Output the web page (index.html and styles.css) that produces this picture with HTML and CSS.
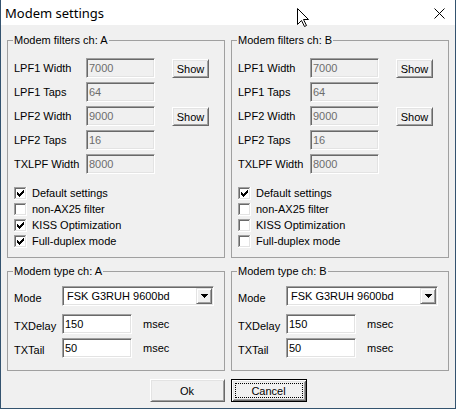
FILE: index.html
```html
<!DOCTYPE html>
<html>
<head>
<meta charset="utf-8">
<title>Modem settings</title>
<link rel="stylesheet" href="styles.css">
</head>
<body>
<svg class="defs" width="0" height="0">
  <defs>
    <symbol id="cb" viewBox="0 0 13 13">
      <rect x="0" y="0" width="13" height="13" fill="#fff"/>
      <rect x="0" y="0" width="12" height="1" fill="#a0a0a0"/>
      <rect x="0" y="0" width="1" height="12" fill="#a0a0a0"/>
      <rect x="1" y="1" width="10" height="1" fill="#696969"/>
      <rect x="1" y="1" width="1" height="10" fill="#696969"/>
      <rect x="1" y="11" width="11" height="1" fill="#e3e3e3"/>
      <rect x="11" y="1" width="1" height="11" fill="#e3e3e3"/>
    </symbol>
    <symbol id="cb-on" viewBox="0 0 13 13">
      <use href="#cb"/>
      <rect x="3" y="5" width="1" height="3" fill="#000"/>
      <rect x="4" y="6" width="1" height="3" fill="#000"/>
      <rect x="5" y="7" width="1" height="3" fill="#000"/>
      <rect x="6" y="6" width="1" height="3" fill="#000"/>
      <rect x="7" y="5" width="1" height="3" fill="#000"/>
      <rect x="8" y="4" width="1" height="3" fill="#000"/>
      <rect x="9" y="3" width="1" height="3" fill="#000"/>
    </symbol>
    <symbol id="tri" viewBox="0 0 7 4">
      <rect x="0" y="0" width="7" height="1" fill="#000"/>
      <rect x="1" y="1" width="5" height="1" fill="#000"/>
      <rect x="2" y="2" width="3" height="1" fill="#000"/>
      <rect x="3" y="3" width="1" height="1" fill="#000"/>
    </symbol>
  </defs>
</svg>

<div class="window">
  <div class="titlebar">
    <span class="title">Modem settings</span>
    <svg class="close" width="11" height="11" viewBox="0 0 11 11">
      <path d="M0.5 0.5 L10.5 10.5 M10.5 0.5 L0.5 10.5" stroke="#000" stroke-width="1" fill="none"/>
    </svg>
  </div>

  <div class="client">
    <div class="columns">
      <div class="col">
        <fieldset class="group filters">
          <legend>Modem filters ch: A</legend>
          <div class="filter-grid">
            <span class="lbl">LPF1 Width</span><span class="edit disabled">7000</span><button class="btn show">Show</button>
            <span class="lbl">LPF1 Taps</span><span class="edit disabled">64</span><span></span>
            <span class="lbl">LPF2 Width</span><span class="edit disabled">9000</span><button class="btn show">Show</button>
            <span class="lbl">LPF2 Taps</span><span class="edit disabled">16</span><span></span>
            <span class="lbl">TXLPF Width</span><span class="edit disabled">8000</span><span></span>
          </div>
          <div class="checks">
            <div class="check"><svg class="box"><use href="#cb-on"/></svg><span>Default settings</span></div>
            <div class="check"><svg class="box"><use href="#cb"/></svg><span>non-AX25 filter</span></div>
            <div class="check"><svg class="box"><use href="#cb-on"/></svg><span>KISS Optimization</span></div>
            <div class="check"><svg class="box"><use href="#cb-on"/></svg><span>Full-duplex mode</span></div>
          </div>
        </fieldset>
        <fieldset class="group type">
          <legend>Modem type ch: A</legend>
          <div class="type-grid">
            <span class="lbl">Mode</span>
            <div class="combo"><span class="combo-text">FSK G3RUH 9600bd</span><span class="drop"><svg class="tri"><use href="#tri"/></svg></span></div>
            <span class="lbl low">TXDelay</span><span class="edit">150</span><span class="unit">msec</span>
            <span class="lbl low">TXTail</span><span class="edit">50</span><span class="unit">msec</span>
          </div>
        </fieldset>
      </div>

      <div class="col">
        <fieldset class="group filters">
          <legend>Modem filters ch: B</legend>
          <div class="filter-grid">
            <span class="lbl">LPF1 Width</span><span class="edit disabled">7000</span><button class="btn show">Show</button>
            <span class="lbl">LPF1 Taps</span><span class="edit disabled">64</span><span></span>
            <span class="lbl">LPF2 Width</span><span class="edit disabled">9000</span><button class="btn show">Show</button>
            <span class="lbl">LPF2 Taps</span><span class="edit disabled">16</span><span></span>
            <span class="lbl">TXLPF Width</span><span class="edit disabled">8000</span><span></span>
          </div>
          <div class="checks">
            <div class="check"><svg class="box"><use href="#cb-on"/></svg><span>Default settings</span></div>
            <div class="check"><svg class="box"><use href="#cb"/></svg><span>non-AX25 filter</span></div>
            <div class="check"><svg class="box"><use href="#cb"/></svg><span>KISS Optimization</span></div>
            <div class="check"><svg class="box"><use href="#cb"/></svg><span>Full-duplex mode</span></div>
          </div>
        </fieldset>
        <fieldset class="group type">
          <legend>Modem type ch: B</legend>
          <div class="type-grid">
            <span class="lbl">Mode</span>
            <div class="combo"><span class="combo-text">FSK G3RUH 9600bd</span><span class="drop"><svg class="tri"><use href="#tri"/></svg></span></div>
            <span class="lbl low">TXDelay</span><span class="edit">150</span><span class="unit">msec</span>
            <span class="lbl low">TXTail</span><span class="edit">50</span><span class="unit">msec</span>
          </div>
        </fieldset>
      </div>
    </div>

    <div class="buttons">
      <button class="btn action">Ok</button>
      <button class="btn action default">Cancel</button>
    </div>
  </div>

  <svg class="cursor" width="13" height="20" viewBox="0 0 13 20">
    <path d="M0.5 0.5 L0.5 16.5 L4.5 12.5 L7.5 18.5 L9.5 17.5 L6.5 11.5 L11.5 11.5 Z" fill="#fff" stroke="#000" stroke-width="1" stroke-linejoin="miter"/>
  </svg>
</div>
</body>
</html>
```

FILE: styles.css
```css
* { box-sizing: border-box; }

html, body {
  margin: 0;
  padding: 0;
}

body {
  background: #f0f0f0;
  font-family: "Liberation Sans", Arial, sans-serif;
  font-size: 11px;
  color: #000;
}

.defs {
  position: absolute;
  width: 0;
  height: 0;
  overflow: hidden;
}

.window {
  position: relative;
  width: 456px;
  height: 409px;
  border: 1px solid #34536f;
  border-top: none;
  background: #f0f0f0;
  display: flex;
  flex-direction: column;
  overflow: hidden;
}

.titlebar {
  height: 25px;
  flex: none;
  background: #fff;
  display: flex;
  align-items: center;
  justify-content: space-between;
  padding: 0 10px 0 4px;
}

.title {
  font-family: "Noto Sans", sans-serif;
  font-size: 13px;
  color: #000;
}

.close {
  display: block;
  margin-top: 2px;
}

.client {
  padding: 8px 6px 0;
  display: flex;
  flex-direction: column;
}

.columns {
  display: grid;
  grid-template-columns: 1fr 1fr;
  column-gap: 6px;
}

.col {
  display: flex;
  flex-direction: column;
  gap: 6px;
}

fieldset.group {
  margin: 0;
  min-width: 0;
  border: 1px solid #a0a0a0;
  padding: 11px 6px 8px;
}

fieldset.type {
  padding: 8px 6px 12px;
}

legend {
  padding: 0 1px;
  margin-left: -1px;
  line-height: 14px;
  font-size: 11px;
}

.filter-grid {
  display: grid;
  grid-template-columns: 72px 69px 54px;
  grid-auto-rows: 20px;
  row-gap: 4px;
  align-items: center;
}

.lbl {
  white-space: nowrap;
}

.edit {
  height: 20px;
  border: 1px solid;
  border-color: #a0a0a0 #fff #fff #a0a0a0;
  box-shadow: inset 1px 1px #696969, inset -1px -1px #e3e3e3;
  background: #fff;
  padding: 0 2px;
  display: flex;
  align-items: center;
  white-space: nowrap;
}

.edit.disabled {
  background: #f0f0f0;
  color: #6d6d6d;
}

.btn {
  font-family: inherit;
  font-size: 11px;
  color: #000;
  background: #f0f0f0;
  border: 1px solid;
  border-color: #fff #696969 #696969 #fff;
  box-shadow: inset 1px 1px #e3e3e3, inset -1px -1px #a0a0a0;
  padding: 0;
  margin: 0;
  display: flex;
  align-items: center;
  justify-content: center;
  position: relative;
}

.show {
  width: 37px;
  height: 19px;
  justify-self: end;
  align-self: end;
}

.checks {
  margin-top: 11px;
  display: flex;
  flex-direction: column;
}

.check {
  height: 16px;
  display: flex;
  align-items: center;
  gap: 5px;
  white-space: nowrap;
}

.box {
  width: 13px;
  height: 13px;
  flex: none;
  display: block;
}

.type-grid {
  display: grid;
  grid-template-columns: 48px 70px 1fr;
  grid-template-rows: 24px 20px 20px;
  row-gap: 4px;
  align-items: center;
}

.lbl.low {
  padding-top: 3px;
}

.combo {
  grid-column: 2 / 4;
  align-self: start;
  width: 152px;
  height: 20px;
  border: 1px solid;
  border-color: #a0a0a0 #fff #fff #a0a0a0;
  box-shadow: inset 1px 1px #696969, inset -1px -1px #e3e3e3;
  background: #fff;
  padding: 1px 1px 1px 4px;
  display: flex;
  align-items: center;
}

.combo-text {
  flex: 1;
  white-space: nowrap;
}

.drop {
  width: 16px;
  height: 16px;
  flex: none;
  background: #f0f0f0;
  border: 1px solid;
  border-color: #e3e3e3 #696969 #696969 #e3e3e3;
  box-shadow: inset 1px 1px #fff, inset -1px -1px #a0a0a0;
  display: flex;
  align-items: center;
  justify-content: center;
}

.tri {
  width: 7px;
  height: 4px;
  display: block;
}

.unit {
  padding-left: 11px;
}

.buttons {
  display: flex;
  justify-content: center;
  gap: 6px;
  margin-top: 8px;
}

.action {
  width: 75px;
  height: 23px;
}

.action.default {
  width: 76px;
  border: 1px solid #000;
  box-shadow: inset 1px 1px #fff, inset -1px -1px #696969, inset 2px 2px #e3e3e3, inset -2px -2px #a0a0a0;
}

.action.default::after {
  content: "";
  position: absolute;
  inset: 3px;
  border: 1px dotted #000;
}

.cursor {
  position: absolute;
  left: 296px;
  top: 8px;
}
```
